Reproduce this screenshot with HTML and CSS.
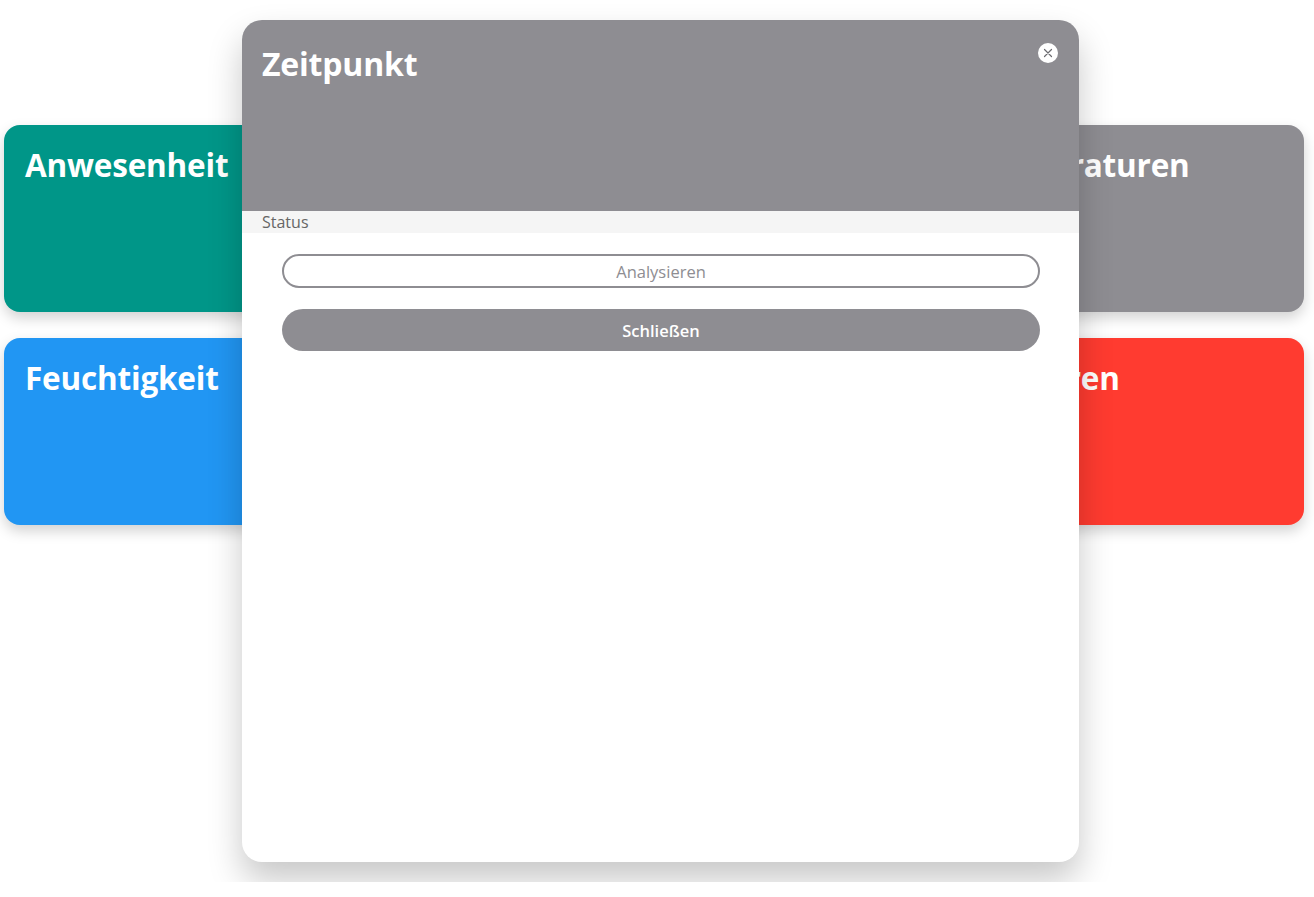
FILE: index.html
```html
<!DOCTYPE html>
<html lang="de">
<head>
<meta charset="utf-8">
<title>Dashboard</title>
<link rel="stylesheet" href="styles.css">
</head>
<body>
<main class="grid">
  <section class="card teal"><h2>Anwesenheit</h2></section>
  <section class="card grey"><h2>Beleuchtung</h2></section>
  <section class="card grey"><h2>IST-Temperaturen</h2></section>
  <section class="card blue"><h2>Feuchtigkeit</h2></section>
  <section class="card grey"><h2>Energie</h2></section>
  <section class="card red"><h2>Gas-Sensoren</h2></section>
</main>
<div class="overlay">
  <div class="modal">
    <header class="modal-head">
      <h1>Zeitpunkt</h1>
      <button class="close" aria-label="Schließen">
        <svg width="10" height="10" viewBox="0 0 10 10"><path d="M1.5 1.5 L8.5 8.5 M8.5 1.5 L1.5 8.5" stroke="#6b6b70" stroke-width="1.2" stroke-linecap="round"/></svg>
      </button>
    </header>
    <div class="status">Status</div>
    <div class="actions">
      <button class="btn outline">Analysieren</button>
      <button class="btn filled">Schließen</button>
    </div>
  </div>
</div>
</body>
</html>
```
FILE: styles.css
```css
* { box-sizing: border-box; }
html, body { margin: 0; padding: 0; background: #fff; }
body {
  font-family: "Open Sans", "Noto Sans", "Liberation Sans", sans-serif;
  width: 1314px;
  height: 897px;
  overflow: hidden;
  position: relative;
}
.grid {
  display: grid;
  grid-template-columns: repeat(3, 1fr);
  grid-auto-rows: 187px;
  gap: 26px;
  padding: 125px 10px 0 4px;
}
.card {
  border-radius: 16px;
  padding: 20px 21px;
  box-shadow: 0 6px 14px rgba(0,0,0,0.18);
  color: #fff;
}
.card h2 {
  margin: 0;
  font-size: 31.5px;
  font-weight: 700;
  line-height: 1.3;
  letter-spacing: -0.2px;
}
.teal { background: #009688; }
.blue { background: #2196f3; }
.red { background: #ff3b30; }
.grey { background: #8e8d92; }

.overlay {
  position: absolute;
  left: 0; top: 0;
  width: 1314px;
  height: 882px;
  overflow: hidden;
}
.modal {
  position: absolute;
  left: 242px;
  top: 20px;
  width: 837px;
  height: 842px;
  background: #fff;
  border-radius: 20px;
  overflow: hidden;
  box-shadow: 0 18px 34px rgba(0,0,0,0.22);
}
.modal-head {
  height: 191px;
  background: #8e8d92;
  position: relative;
  padding: 23px 20px;
}
.modal-head h1 {
  margin: 0;
  color: #fff;
  font-size: 32px;
  font-weight: 700;
  line-height: 1.3;
  letter-spacing: -0.2px;
}
.close {
  position: absolute;
  right: 21px;
  top: 23px;
  width: 20px;
  height: 20px;
  border-radius: 50%;
  border: none;
  background: #fff;
  padding: 0;
  display: flex;
  align-items: center;
  justify-content: center;
}
.status {
  background: #f5f5f5;
  height: 22px;
  padding: 0 20px;
  font-size: 16px;
  line-height: 22px;
  color: #666;
}
.actions {
  display: flex;
  flex-direction: column;
  gap: 21px;
  padding: 21px 39px 0 40px;
}
.btn {
  font-family: inherit;
  font-size: 16.5px;
  border-radius: 22px;
  width: 100%;
}
.outline {
  height: 34px;
  background: #fff;
  border: 2px solid #8e8d92;
  color: #8e8d92;
}
.filled {
  height: 42px;
  background: #8e8d92;
  border: none;
  color: #fff;
  font-weight: 600;
}
```
